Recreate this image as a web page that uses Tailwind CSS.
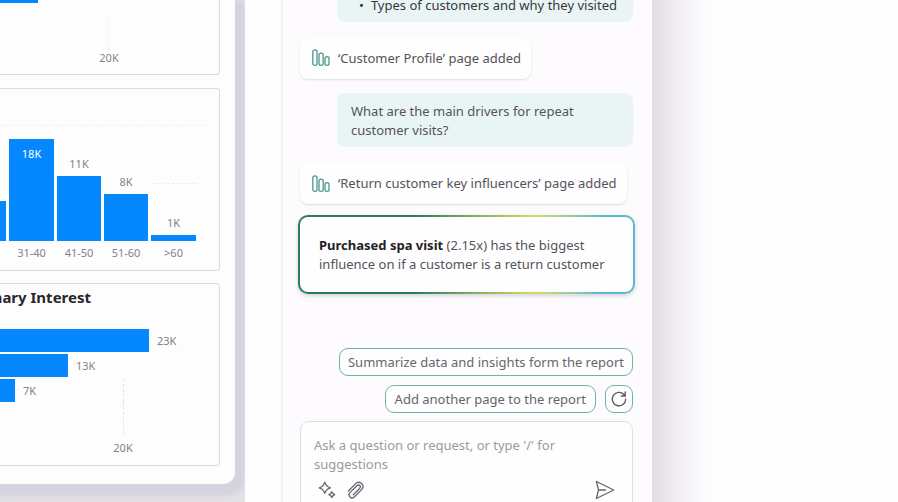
<!DOCTYPE html>
<html lang="en">
<head>
<meta charset="utf-8">
<meta name="viewport" content="width=device-width, initial-scale=1">
<title>Report and chat</title>
<script src="https://cdn.jsdelivr.net/npm/@tailwindcss/browser@4"></script>
</head>
<body class="flex h-screen overflow-hidden bg-[#fefefe] font-['Noto_Sans','Open_Sans',sans-serif] text-[13px] leading-[19px] text-[#55525a]">

<!-- Report canvas -->
<main class="w-[245px] shrink-0 overflow-hidden bg-[#e3e1e6]">
  <div class="mr-[10px] rounded-br-xl bg-[#fdfdfe] pr-[15px] pb-[18px] shadow-[4px_6px_5px_6px_#d6d3e0]">

    <section class="h-[75px] overflow-hidden rounded-br border-r border-b border-[#dcd9df] text-[11px] leading-4 text-[#85828a]" aria-label="Bar chart">
      <div class="h-[3px] w-[38px] bg-[#0588fe]"></div>
      <div class="mt-3 ml-[108px] h-[35px] border-l border-dashed border-[#efedf2]"></div>
      <div class="ml-[89px] w-10 text-center">20K</div>
    </section>

    <section class="mt-[13px] h-[183px] overflow-hidden rounded-r border-y border-r border-[#dcd9df] pt-9 text-[11px] leading-4 text-[#85828a]" aria-label="Visits by age">
      <div class="mr-[10px] border-t border-dashed border-[#f3f1f5]"></div>
      <div class="flex h-[115px] items-end gap-[3px]">
        <div class="h-10 w-[6px] bg-[#0588fe]"></div>
        <div class="h-[102px] w-[45px] bg-[#0588fe] pt-[7px] text-center text-white">18K</div>
        <div class="w-11 text-center"><span>11K</span><div class="mt-1 h-[65px] bg-[#0588fe]"></div></div>
        <div class="w-11 text-center"><span>8K</span><div class="mt-1 h-[47px] bg-[#0588fe]"></div></div>
        <div class="relative w-[45px] text-center">
          <div class="absolute bottom-[57px] w-full border-t border-dashed border-[#eeecf1]"></div>
          <span>1K</span><div class="mt-1 h-[6px] bg-[#0588fe]"></div>
        </div>
      </div>
      <div class="mt-1 ml-[9px] flex gap-[3px] text-center">
        <span class="w-[45px]">31-40</span><span class="w-11">41-50</span><span class="w-11">51-60</span><span class="w-[45px]">&gt;60</span>
      </div>
    </section>

    <section class="mt-3 h-[183px] overflow-hidden rounded-r border-y border-r border-[#dcd9df] text-[11px] leading-4 text-[#85828a]" aria-label="Primary Interest">
      <h2 class="mt-[3px] flex w-[91px] justify-end text-[15px] leading-5 font-bold whitespace-nowrap text-[#29262c]">Primary Interest</h2>
      <div class="mt-[22px] flex flex-col gap-[2px]">
        <div class="flex items-center gap-2"><div class="h-[23px] w-[149px] bg-[#0588fe]"></div>23K</div>
        <div class="flex items-center gap-2"><div class="h-[23px] w-[68px] bg-[#0588fe]"></div>13K</div>
        <div class="flex">
          <div class="flex w-[123px] items-center gap-2"><div class="h-[23px] w-[15px] bg-[#0588fe]"></div>7K</div>
          <div class="border-l border-dashed border-[#e6e3ea]"></div>
        </div>
      </div>
      <div class="ml-[123px] h-8 border-l border-dashed border-[#e6e3ea]"></div>
      <div class="mt-[6px] ml-[103px] w-10 text-center">20K</div>
    </section>
  </div>
</main>

<!-- Chat pane -->
<aside class="ml-[36px] flex w-[371px] shrink-0 flex-col overflow-hidden border-l-2 border-[#f3f1f5] bg-[#fdfbfe] pr-[19px] pl-[17px]">
  <ul class="ml-[37px] h-[22px] shrink-0 rounded-b-lg bg-[#e9f5f5] pl-[22px] text-[#39363c]">
    <li class="-mt-1 flex gap-[7px] whitespace-nowrap"><span aria-hidden="true">•</span>Types of customers and why they visited</li>
  </ul>

  <div class="mt-[15px] flex h-[42px] shrink-0 items-center gap-2 self-start rounded-lg bg-[#fefefe] pr-[10px] pl-3 whitespace-nowrap shadow-[0_1px_2px_#e0dbe3]">
    <svg class="size-[18px]" viewBox="0 0 18 18" fill="none" stroke="#5b9f92" stroke-width="1.4" aria-hidden="true"><rect x=".8" y="1" width="4.2" height="15.4" rx="1.8"/><rect x="7" y="4.3" width="4.2" height="12.1" rx="1.8"/><rect x="13" y="7.7" width="4" height="8.7" rx="1.8"/></svg>
    <span>‘Customer Profile’ page added</span>
  </div>

  <p class="mt-[14px] ml-[37px] h-[54px] shrink-0 rounded-lg bg-[#e9f5f5] px-[14px] py-[9px]">What are the main drivers for repeat<br>customer visits?</p>

  <div class="mt-4 flex h-[41px] shrink-0 items-center gap-2 self-start rounded-lg bg-[#fefefe] pr-[10px] pl-3 whitespace-nowrap shadow-[0_1px_2px_#e0dbe3]">
    <svg class="size-[18px]" viewBox="0 0 18 18" fill="none" stroke="#5b9f92" stroke-width="1.4" aria-hidden="true"><rect x=".8" y="1" width="4.2" height="15.4" rx="1.8"/><rect x="7" y="4.3" width="4.2" height="12.1" rx="1.8"/><rect x="13" y="7.7" width="4" height="8.7" rx="1.8"/></svg>
    <span>‘Return customer key influencers’ page added</span>
  </div>

  <div class="mt-[11px] -mr-[2px] -ml-[2px] shrink-0 rounded-[10px] bg-linear-to-r from-[#247f5d] from-35% via-[#d3dd5d] via-70% to-[#5bbac5] to-90% p-[2px] shadow-[0_2px_4px_#d8d3dc]">
    <p class="h-[75px] rounded-lg bg-[#fefefe] px-[19px] py-[19px] whitespace-nowrap"><strong class="font-bold text-[#232126]">Purchased spa visit</strong> (2.15x) has the biggest<br>influence on if a customer is a return customer</p>
  </div>

  <div class="mt-[54px] flex shrink-0 flex-wrap justify-end gap-[9px] text-[#68656d]">
    <button type="button" class="h-7 rounded-[9px] border border-[#6fb3a8] bg-[#fefefe] px-2 whitespace-nowrap">Summarize data and insights form the report</button>
    <button type="button" class="h-7 rounded-[9px] border border-[#6fb3a8] bg-[#fefefe] px-[9px] whitespace-nowrap">Add another page to the report</button>
    <button type="button" aria-label="Refresh" class="flex size-7 items-center justify-center rounded-[9px] border border-[#6fb3a8] bg-[#fefefe]">
      <svg class="size-4 shrink-0" viewBox="0 0 16 16" fill="none" stroke="#615a66" stroke-width="1.4" stroke-linecap="round" aria-hidden="true"><path d="M14.7 8.2A6.7 6.7 0 1 1 12.9 3.5L14 4.8M14.2 1v4H10.3"/></svg>
    </button>
  </div>

  <form class="mt-2 h-[110px] shrink-0 rounded-[9px] border border-[#e1dce4] bg-[#fefefe] px-[13px] pt-[14px]">
    <textarea aria-label="Message" rows="2" class="block h-[38px] w-full resize-none overflow-hidden bg-transparent placeholder:text-[#a097a5] focus:outline-none" placeholder="Ask a question or request, or type '/' for suggestions"></textarea>
    <div class="mt-[6px] flex items-center gap-[10px] pl-[3px]">
      <button type="button" aria-label="Prompt ideas"><svg class="block size-5" viewBox="0 0 20 20" fill="none" stroke="#69646e" stroke-width="1.3" stroke-linejoin="round" aria-hidden="true"><path d="M7.8 2.2Q9 6.6 13.4 7.8Q9 9 7.8 13.4Q6.6 9 2.2 7.8Q6.6 6.6 7.8 2.2ZM14.8 11.7Q15.6 13.8 17.7 14.6Q15.6 15.4 14.8 17.5Q14 15.4 11.9 14.6Q14 13.8 14.8 11.7Z"/></svg></button>
      <button type="button" aria-label="Attach file"><svg class="block size-[18px]" viewBox="0 0 18 18" fill="none" stroke="#69646e" stroke-width="1.3" stroke-linecap="round" aria-hidden="true"><path d="M1.4 10L8.4 2.9C12.6-1.2 18.6 4.2 14.6 8.6L7.6 15.8C4.4 18.8 .2 14.7 3 11.6L9.8 4.8C12 2.8 14.7 5.2 12.6 7.5L6.3 13.8"/></svg></button>
      <button type="submit" aria-label="Send" class="mr-1 ml-auto"><svg class="block size-5" viewBox="0 0 20 20" fill="none" stroke="#69646e" stroke-width="1.3" stroke-linejoin="round" aria-hidden="true"><path d="M1.4 1.5L18.7 10L1.4 18.5L3.5 10ZM3.5 10H11"/></svg></button>
    </div>
  </form>
</aside>

<div class="min-w-0 flex-1 bg-linear-to-r from-[#e2dde4] from-0% via-[#f6f4f9] via-[36px] to-[#fefefe] to-[64px]" aria-hidden="true"></div>
</body>
</html>
